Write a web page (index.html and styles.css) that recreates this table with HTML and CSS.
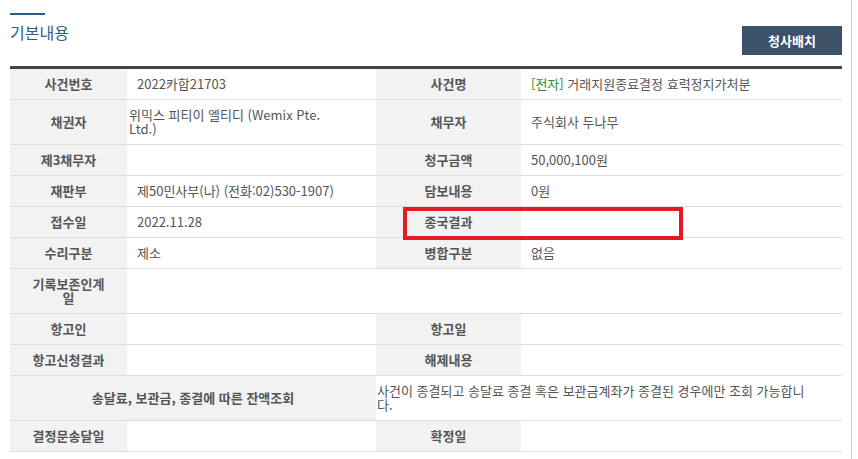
FILE: index.html
```html
<!DOCTYPE html>
<html lang="ko">
<head>
  <meta charset="UTF-8" />
  <title>기본내용</title>
  <link rel="stylesheet" href="styles.css">
</head>
<body>
  <div class="page">
    <div class="head">
      <div class="title-box">
        <div class="accent"></div>
        <h2 class="title">기본내용</h2>
      </div>
      <button class="map-btn">청사배치</button>
    </div>

    <table class="info">
      <colgroup>
        <col class="c-label1">
        <col class="c-value1">
        <col class="c-label2">
        <col class="c-value2">
      </colgroup>
      <tr>
        <th>사건번호</th>
        <td>2022카합21703</td>
        <th>사건명</th>
        <td><span class="tag">[전자]</span> 거래지원종료결정 효력정지가처분</td>
      </tr>
      <tr>
        <th>채권자</th>
        <td class="tight"> 위믹스 피티이 엘티디 (Wemix Pte. Ltd.)</td>
        <th>채무자</th>
        <td>주식회사 두나무</td>
      </tr>
      <tr>
        <th>제3채무자</th>
        <td></td>
        <th>청구금액</th>
        <td>50,000,100원</td>
      </tr>
      <tr>
        <th>재판부</th>
        <td>제50민사부(나) (전화:02)530-1907)</td>
        <th>담보내용</th>
        <td>0원</td>
      </tr>
      <tr>
        <th>접수일</th>
        <td>2022.11.28</td>
        <th>종국결과</th>
        <td></td>
      </tr>
      <tr>
        <th>수리구분</th>
        <td>제소</td>
        <th>병합구분</th>
        <td>없음</td>
      </tr>
      <tr>
        <th>기록보존인계일</th>
        <td colspan="3"></td>
      </tr>
      <tr>
        <th>항고인</th>
        <td></td>
        <th>항고일</th>
        <td></td>
      </tr>
      <tr>
        <th>항고신청결과</th>
        <td></td>
        <th>해제내용</th>
        <td></td>
      </tr>
      <tr>
        <th colspan="2">송달료, 보관금, 종결에 따른 잔액조회</th>
        <td colspan="2" class="notice">사건이 종결되고 송달료 종결 혹은 보관금계좌가 종결된 경우에만 조회 가능합니다.</td>
      </tr>
      <tr>
        <th>결정문송달일</th>
        <td></td>
        <th>확정일</th>
        <td></td>
      </tr>
    </table>

    <!-- highlight box drawn over the 종국결과 row -->
    <div class="mark"></div>
  </div>
</body>
</html>
```

FILE: styles.css
```css
* {
  margin: 0;
  padding: 0;
  box-sizing: border-box;
}
body {
  background: #fff;
  font-family: "Noto Sans CJK KR", "Noto Sans", sans-serif;
  font-size: 13px;
  color: #555;
}
.page {
  position: relative;
  width: 852px;
  min-height: 100vh;
  padding: 13px 9px 0 10px;
  border-right: 1px solid #ccc;
}
.head {
  display: flex;
  justify-content: space-between;
  align-items: flex-end;
  height: 42px;
  margin-bottom: 11px;
}
.title-box {
  align-self: flex-start;
}
.accent {
  width: 35px;
  height: 2px;
  background: #2f5d8a;
}
.title {
  margin-top: 7px;
  font-size: 16px;
  font-weight: normal;
  line-height: 20px;
  color: #2f5d8a;
}
.map-btn {
  width: 100px;
  height: 29px;
  border: none;
  background: #3b5269;
  color: #fff;
  font-family: inherit;
  font-size: 13px;
  font-weight: bold;
}
.info {
  width: 832px;
  table-layout: fixed;
  border-collapse: collapse;
  border-top: 3px solid #444;
}
.c-label1 { width: 117px; }
.c-value1 { width: 249px; }
.c-label2 { width: 145px; }
.c-value2 { width: 321px; }
.info th,
.info td {
  line-height: 14px;
  padding: 8px 10px;
  border-bottom: 1px solid #ddd;
  vertical-align: middle;
}
.info th {
  padding: 8px 18px;
  background: #f2f2f2;
  color: #555;
  font-weight: bold;
  text-align: center;
}
.info td {
  text-align: left;
  color: #555;
}
.info td.tight {
  padding: 8px 35px 8px 2px;
}
.info td.notice {
  padding: 8px 30px 8px 1px;
}
.tag {
  color: #2d8a2d;
}
.mark {
  position: absolute;
  left: 403px;
  top: 207px;
  width: 280px;
  height: 33px;
  border: 4px solid #e31b23;
}
```
